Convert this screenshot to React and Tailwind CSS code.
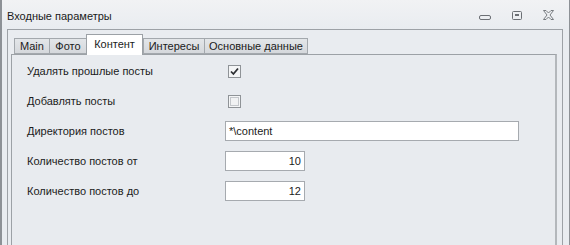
import React from 'react'

const tabs = [
  { name: 'Main', w: 'w-[35px]' },
  { name: 'Фото', w: 'w-[37px]' },
  { name: 'Контент', w: 'w-[57px]', active: true },
  { name: 'Интересы', w: 'w-[61px]' },
  { name: 'Основные данные', w: 'w-[104px]' },
]

function Checkbox({ checked }) {
  return (
    <div className="ml-[3px] w-[13px] h-[13px] border border-[#8f9397] bg-[#f4f5f6] flex items-center justify-center">
      {checked ? (
        <svg width="9" height="9" viewBox="0 0 9 9">
          <path d="M1 4.5 L3.4 7 L8 1.5" stroke="#2d2f33" strokeWidth="1.8" fill="none" />
        </svg>
      ) : (
        <div className="w-[9px] h-[9px] border border-[#c4c7cb] bg-[#f1f2f3]" />
      )}
    </div>
  )
}

function Row({ label, children }) {
  return (
    <div className="h-[30px] flex items-center">
      <div className="w-[198px] shrink-0 whitespace-nowrap">{label}</div>
      {children}
    </div>
  )
}

function Field({ value, wide }) {
  return (
    <div
      className={`h-[20px] border border-[#a6aaaf] bg-white flex items-center px-[3px] ${
        wide ? 'w-[294px]' : 'w-[80px] justify-end'
      }`}>
      {value}
    </div>
  )
}

export default function App() {
  return (
    <div
      className="w-[570px] h-[245px] overflow-hidden flex flex-col bg-[#e9ecf0] border-l-2 border-r border-[#8d9196] text-[11px] text-[#1b1b1b]"
      style={{ fontFamily: '"Liberation Sans", Tahoma, sans-serif' }}>
      {/* title bar */}
      <div className="h-[29px] shrink-0 flex items-center pl-[5px] pt-[3px] bg-gradient-to-b from-[#f1f2f4] to-[#e9ecf0]">
        <span className="flex-1">Входные параметры</span>
        <svg width="12" height="6" viewBox="0 0 12 6" className="mt-[3px]">
          <rect x="0.5" y="0.5" width="11" height="4" rx="1.5" fill="none" stroke="#6b6f74" />
        </svg>
        <svg width="10" height="9" viewBox="0 0 10 9" className="ml-[21px] -mt-[2px]">
          <rect x="0.5" y="0.5" width="9" height="8" rx="1" fill="none" stroke="#6b6f74" />
          <rect x="3" y="3" width="4" height="2" fill="#6b6f74" />
        </svg>
        <svg width="11" height="10" viewBox="0 0 11 10" className="ml-[21px] mr-[15px] -mt-[2px]">
          <path
            d="M0.5 0.5 H3 L5.5 3 L8 0.5 H10.5 L7 5 L10.5 9.5 H8 L5.5 7 L3 9.5 H0.5 L4 5 Z"
            fill="none"
            stroke="#6b6f74"
            strokeWidth="0.9"
          />
        </svg>
      </div>

      {/* frame */}
      <div className="ml-[5px] mr-[6px] h-[240px] shrink-0 border border-[#9da1a6] pl-[3px] pr-[5px] pt-[3px]">
        <div className="flex pl-[3px] h-[21px] items-end relative z-10">
          {tabs.map((t) =>
            t.active ? (
              <div
                key={t.name}
                className={`${t.w} h-[21px] bg-white border border-b-0 border-[#9ca1a6] flex items-center justify-center whitespace-nowrap -mb-px pb-[2px]`}>
                {t.name}
              </div>
            ) : (
              <div
                key={t.name}
                className={`${t.w} h-[16px] bg-gradient-to-b from-[#e3e6e9] to-[#d5d8dc] border border-r-0 last:border-r border-[#a3a8ad] flex items-center justify-center whitespace-nowrap`}>
                {t.name}
              </div>
            )
          )}
        </div>
        <div className="h-[220px] border border-[#9ca1a6] border-r-2 border-r-[#b3b7bb] bg-[#e8ebef] pl-[15px] pt-px">
          <Row label="Удалять прошлые посты">
            <Checkbox checked />
          </Row>
          <Row label="Добавлять посты">
            <Checkbox />
          </Row>
          <Row label="Директория постов">
            <Field value="*\content" wide />
          </Row>
          <Row label="Количество постов от">
            <Field value="10" />
          </Row>
          <Row label="Количество постов до">
            <Field value="12" />
          </Row>
        </div>
      </div>
    </div>
  )
}
